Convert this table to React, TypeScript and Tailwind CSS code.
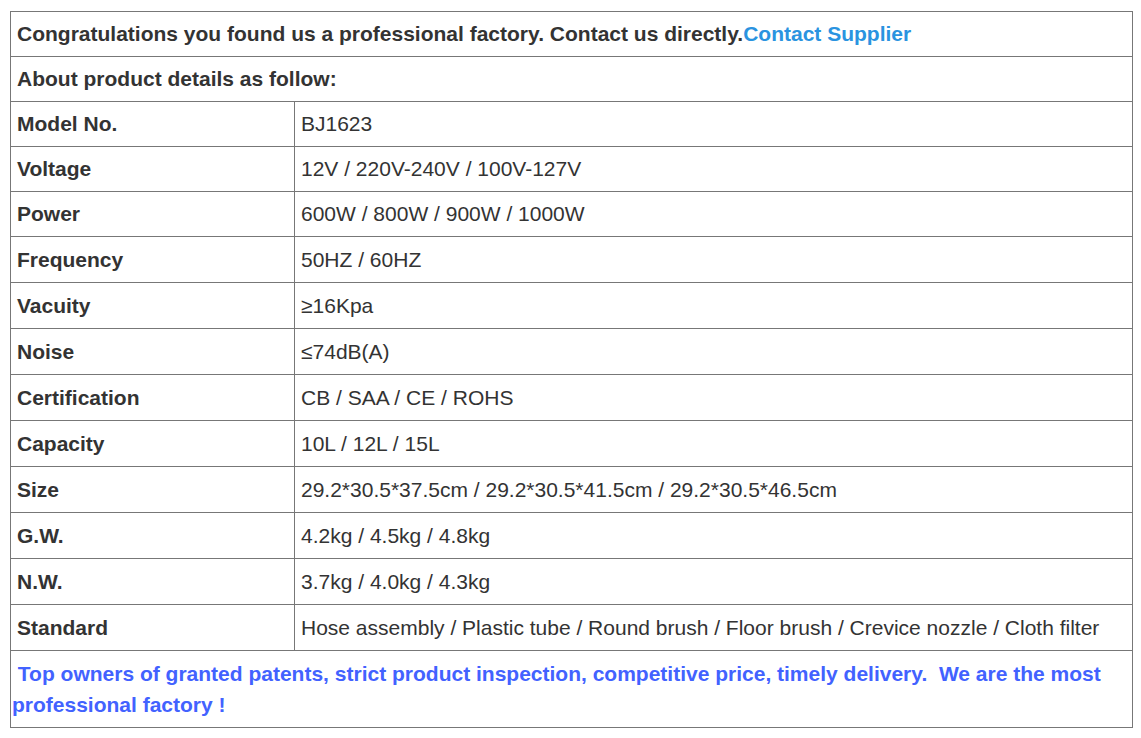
import React from 'react';

const specs: [string, string][] = [
  ['Model No.', 'BJ1623'],
  ['Voltage', '12V / 220V-240V / 100V-127V'],
  ['Power', '600W / 800W / 900W / 1000W'],
  ['Frequency', '50HZ / 60HZ'],
  ['Vacuity', '≥16Kpa'],
  ['Noise', '≤74dB(A)'],
  ['Certification', 'CB / SAA / CE / ROHS'],
  ['Capacity', '10L / 12L / 15L'],
  ['Size', '29.2*30.5*37.5cm / 29.2*30.5*41.5cm / 29.2*30.5*46.5cm'],
  ['G.W.', '4.2kg / 4.5kg / 4.8kg'],
  ['N.W.', '3.7kg / 4.0kg / 4.3kg'],
  ['Standard', 'Hose assembly / Plastic tube / Round brush / Floor brush / Crevice nozzle / Cloth filter'],
];

export default function App() {
  return (
    <div className="w-[1141px] h-[738px] bg-white pt-[11px] pl-[10px] font-['Liberation_Sans',Arial,sans-serif] text-[21px] text-[#333]">
      <table className="w-[1123px] border-collapse border border-[#333]">
        <tbody>
          <tr className="h-[45px]">
            <td colSpan={2} className="border border-[#777] px-[6px] font-bold">
              Congratulations you found us a professional factory. Contact us directly.
              <span className="text-[#2a93e0]">Contact Supplier</span>
            </td>
          </tr>
          <tr className="h-[45px]">
            <td colSpan={2} className="border border-[#777] px-[6px] font-bold">
              About product details as follow:
            </td>
          </tr>
          {specs.map(([k, v], i) => (
            <tr key={k} className={i < 3 ? 'h-[45px]' : 'h-[46px]'}>
              <td className="w-[284px] border border-[#777] px-[6px] font-bold">{k}</td>
              <td className="border border-[#777] px-[6px]">{v}</td>
            </tr>
          ))}
          <tr className="h-[77px]">
            <td colSpan={2} className="border border-[#777] px-px font-bold text-[#4262ff] leading-[31px]">
              &nbsp;Top owners of granted patents, strict product inspection, competitive price, timely delivery.&nbsp; We are the most professional factory !
            </td>
          </tr>
        </tbody>
      </table>
    </div>
  );
}
